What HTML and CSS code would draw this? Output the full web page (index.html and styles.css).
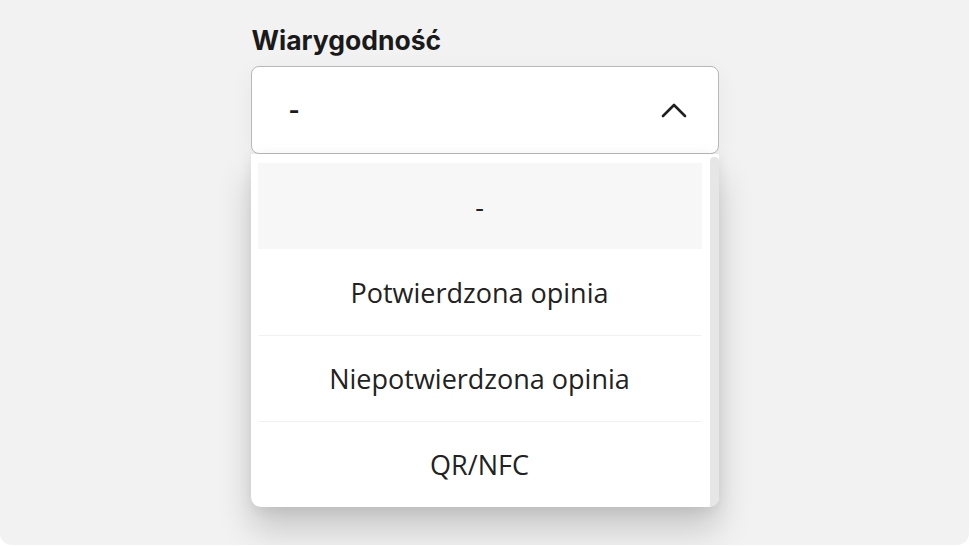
FILE: index.html
```html
<!DOCTYPE html>
<html>
<head>
    <meta charset="utf-8">
    <title>Wiarygodność</title>
    <link rel="stylesheet" href="styles.css">
</head>
<body>

<div class="panel">
    <div class="field">
        <div class="label">Wiarygodność</div>
        <div class="select">
            <span class="value">-</span>
            <svg class="chevron" width="26" height="16" viewBox="0 0 26 16">
                <polyline points="2,14 13,3 24,14" fill="none" stroke="#1f1f1f" stroke-width="2.6" stroke-linecap="round" stroke-linejoin="round"/>
            </svg>
        </div>
        <div class="menu">
            <div class="options">
                <div class="option active">-</div>
                <div class="option">Potwierdzona opinia</div>
                <div class="option">Niepotwierdzona opinia</div>
                <div class="option">QR/NFC</div>
            </div>
            <div class="scrollbar"></div>
        </div>
    </div>
</div>

</body>
</html>
```

FILE: styles.css
```css
body { margin: 0; background-color: #ffffff; }
.panel { width: 969px; height: 545px; background-color: #f2f2f2; border-radius: 0 0 12px 12px; padding-top: 24px; box-sizing: border-box; display: flex; flex-direction: column; align-items: center; }
.field { width: 468px; }
.label { font-family: Inter, "Liberation Sans", sans-serif; font-weight: 700; font-size: 26.5px; line-height: 32px; color: #1a1a1a; margin-bottom: 10px; padding-left: 1px; }
.select { height: 88px; box-sizing: border-box; background-color: #ffffff; border: 1px solid #b8b8b8; border-radius: 8px; display: flex; align-items: center; justify-content: space-between; padding: 0 31px 0 37px; box-shadow: 0 6px 24px rgba(0, 0, 0, 0.05); }
.value { font-family: Inter, "Liberation Sans", sans-serif; font-weight: 700; font-size: 24px; color: #1a1a1a; }
.chevron { display: block; }
.menu { height: 353px; background-color: #ffffff; border-radius: 0 0 10px 10px; box-shadow: 0 22px 34px rgba(0, 0, 0, 0.18), 0 4px 14px rgba(0, 0, 0, 0.07); display: flex; overflow: hidden; }
.options { flex: 1; padding: 9px 8px 0 7px; }
.option { height: 86px; display: flex; align-items: center; justify-content: center; font-family: "Open Sans", "Noto Sans", sans-serif; font-size: 27px; color: #222222; border-top: 1px solid #f1f1f1; box-sizing: border-box; margin: 0 1px; }
.option.active { background-color: #f7f7f7; border-top: none; margin: 0; }
.option.active + .option { border-top: none; }
.scrollbar { width: 9px; margin-top: 3px; background-color: #e6e6e6; border-radius: 4px 4px 0 0; }
```
